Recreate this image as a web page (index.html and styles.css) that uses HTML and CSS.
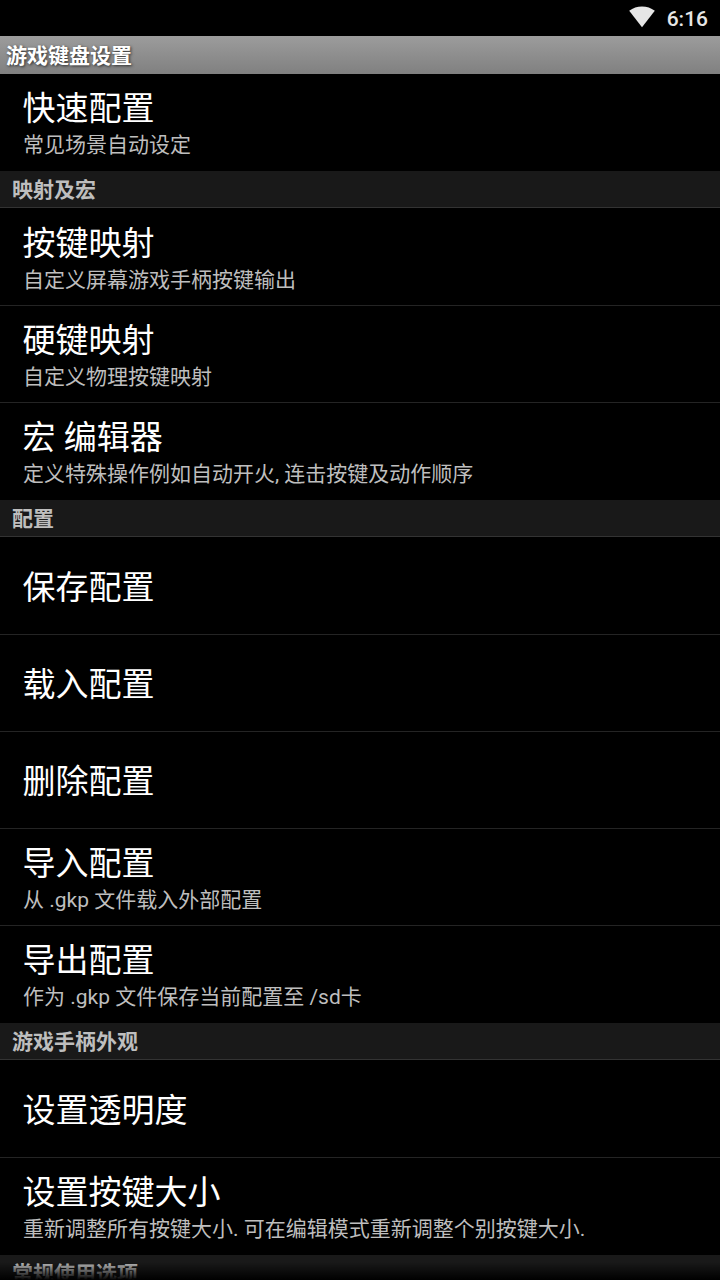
FILE: index.html
```html
<!DOCTYPE html>
<html lang="zh-CN">
<head>
    <meta charset="UTF-8">
    <meta name="viewport" content="width=device-width, initial-scale=1.0">
    <title>游戏键盘设置</title>
    <link rel="stylesheet" href="styles.css">
</head>
<body>
    <div class="status-bar">
        <svg class="wifi" width="26" height="22" viewBox="0 0 26 22">
            <path d="M13 21.2 L0.2 4.8 Q5.8 0.4 13 0.4 T25.8 4.8 Z" fill="#e6e6e6"/>
        </svg>
        <span class="clock">6:16</span>
    </div>
    <h1 class="title-bar">游戏键盘设置</h1>
    <div class="list">
        <div class="group">
            <div class="row">
                <div class="name">快速配置</div>
                <div class="summary">常见场景自动设定</div>
            </div>
        </div>

        <h2 class="section">映射及宏</h2>
        <div class="group">
            <div class="row">
                <div class="name">按键映射</div>
                <div class="summary">自定义屏幕游戏手柄按键输出</div>
            </div>
            <div class="row">
                <div class="name">硬键映射</div>
                <div class="summary">自定义物理按键映射</div>
            </div>
            <div class="row">
                <div class="name">宏 编辑器</div>
                <div class="summary">定义特殊操作例如自动开火, 连击按键及动作顺序</div>
            </div>
        </div>

        <h2 class="section">配置</h2>
        <div class="group">
            <div class="row">
                <div class="name">保存配置</div>
            </div>
            <div class="row">
                <div class="name">载入配置</div>
            </div>
            <div class="row">
                <div class="name">删除配置</div>
            </div>
            <div class="row">
                <div class="name">导入配置</div>
                <div class="summary">从 .gkp 文件载入外部配置</div>
            </div>
            <div class="row">
                <div class="name">导出配置</div>
                <div class="summary">作为 .gkp 文件保存当前配置至 /sd卡</div>
            </div>
        </div>

        <h2 class="section">游戏手柄外观</h2>
        <div class="group">
            <div class="row">
                <div class="name">设置透明度</div>
            </div>
            <div class="row">
                <div class="name">设置按键大小</div>
                <div class="summary">重新调整所有按键大小. 可在编辑模式重新调整个别按键大小.</div>
            </div>
        </div>

        <h2 class="section">常规使用选项</h2>
        <div class="fade"></div>
    </div>
</body>
</html>
```

FILE: styles.css
```css
:root {
    --text-color: #fff;
    --summary-color: #bebebe;
    --section-color: #191919;
    --divider-color: #242424;
}

* {
    box-sizing: border-box;
}

body {
    font-family: Roboto, "Noto Sans CJK SC", sans-serif;
    margin: 0;
    height: 1280px;
    display: flex;
    flex-direction: column;
    background-color: #000;
    color: var(--text-color);
    overflow: hidden;
}

.status-bar {
    display: flex;
    flex: none;
    justify-content: flex-end;
    align-items: center;
    gap: 11px;
    height: 36px;
    padding-right: 12px;
}

.wifi {
    margin-right: 1px;
    margin-bottom: 2px;
}

.clock {
    font-size: 21px;
    font-weight: 500;
    line-height: 36px;
    padding-top: 1px;
    color: #e6e6e6;
}

.title-bar {
    flex: none;
    height: 38px;
    margin: 0;
    padding-left: 6px;
    font-size: 21px;
    font-weight: bold;
    line-height: 40px;
    background: linear-gradient(#9c9c9c, #808080);
    text-shadow: 1px 1px 3px rgba(0, 0, 0, 0.7);
}

.list {
    position: relative;
    flex: 1;
    min-height: 0;
    overflow: hidden;
}

.row {
    display: flex;
    flex-direction: column;
    justify-content: center;
    height: 97px;
    padding-top: 4px;
    padding-left: 23px;
    border-bottom: 1px solid var(--divider-color);
}

.section + .group .row:first-child {
    height: 98px;
    padding-top: 5px;
}

.group .row:last-child {
    height: 97px;
    padding-bottom: 1px;
    border-bottom: none;
}

.name {
    margin-left: -0.5px;
    font-size: 33px;
    line-height: 42px;
}

.summary {
    font-size: 21px;
    line-height: 30px;
    color: var(--summary-color);
}

.section {
    height: 37px;
    margin: 0;
    padding-left: 12px;
    font-size: 21px;
    font-weight: bold;
    line-height: 39px;
    color: var(--summary-color);
    background-color: var(--section-color);
    border-bottom: 1px solid #333;
}

/* bottom scroll fade */
.fade {
    position: absolute;
    left: 0;
    right: 0;
    bottom: 0;
    height: 18px;
    background: linear-gradient(transparent, #000);
}
```
